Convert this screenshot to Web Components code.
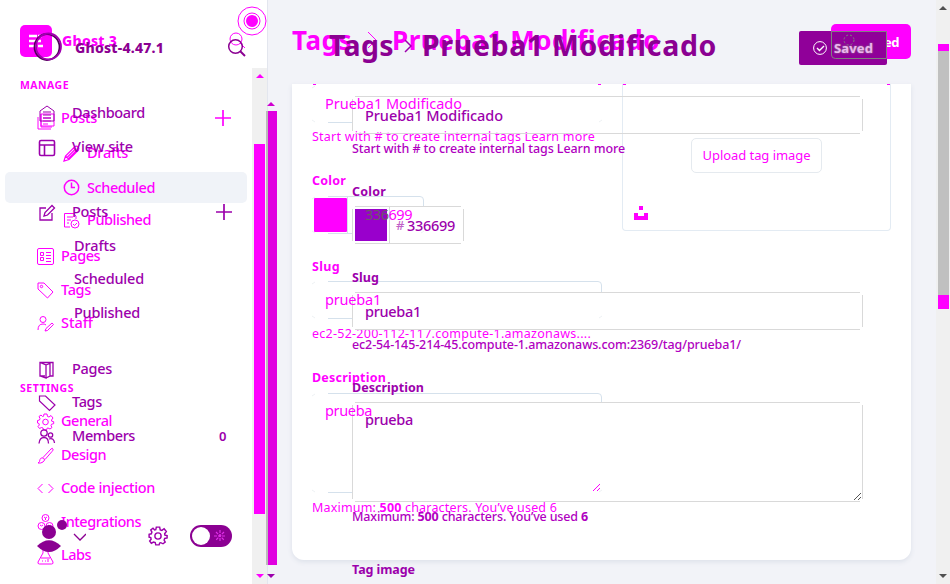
<!DOCTYPE html>
<html lang="en"><head><meta charset="utf-8"><title>Tags</title>
<style>
html,body{margin:0;height:584px;overflow:hidden;background:#f2f3f8}
body{font-family:"Noto Sans","Open Sans",sans-serif}
</style></head><body>
<app-shell></app-shell>
<script>
const define=(name,html,after)=>customElements.define(name,class extends HTMLElement{
  connectedCallback(){
    if(this.shadowRoot)return;
    this.attachShadow({mode:'open'}).innerHTML=typeof html==='function'?html(this):html;
    if(after)after(this);
  }
});

// Single line of text, tracked so that it fills the width in "w".
define('fit-text','<style>:host{display:block;flex:none;white-space:nowrap;line-height:20px;height:20px}span{display:inline-block}</style><span><slot></slot></span>',el=>{
  const w=+el.getAttribute('w'),s=el.shadowRoot.querySelector('span');
  el.style.width=w+'px';
  const n=el.textContent.length,have=s.getBoundingClientRect().width;
  s.style.letterSpacing=((w-have)/n)+'px';
});

const icons={
  posts:'<path d="M4 4v13h11M1 7v12h13M4 4h13v12H4zM6 8h8M6 11h8M6 14h5"/>',
  home:'<path d="M2 16V6l7-5 7 5v10zM5 7h8M5 10h8M5 13h8"/>',
  layout:'<path stroke-width="1.600" d="M3 1.500h12q1.500 0 1.500 1.500v12q0 1.500-1.500 1.500H3Q1.500 16.500 1.500 15V3Q1.500 1.500 3 1.500zM1.500 6h15M6.500 6v10.500"/>',
  pencil:'<path d="M1 16l1.500-5L12 1.500q1.500-1 3 .5t.5 3L6 14.500zM2.500 11l3.500 3.500M10.500 3l3.500 3.500M4 12.500l8-8M5.500 13.500l8-8" stroke-width="1.200"/>',
  clock:'<circle cx="8.500" cy="8.500" r="7.200" stroke-width="1.500"/><path stroke-width="1.500" d="M8.500 3.500v5H12"/>',
  pub:'<path d="M7 15H1.500V1.500h9L13 4v3M4 5h6M4 8h4M4 11h2"/><circle cx="12" cy="12" r="4"/><path d="M10 12l1.500 1.500L14 11"/>',
  edit:'<path stroke-width="1.300" d="M8 4H2v12h12V9M6 12l1-3.500L14 1.500l2.500 2.500-7 7z"/>',
  list:'<rect x=".5" y=".5" width="16" height="16" rx="1.500"/><path d="M3.500 4.500h3v3h-3zM3.500 9.500h3v3h-3zM9 4.500h5M9 7.500h5M9 10.500h5M9 13.500h5"/>',
  tag:'<path d="M1 1h6l9 9-5.500 6L1 7z"/><circle cx="4.500" cy="4.500" r="1.200"/>',
  tag2:'<path stroke-width="1.200" d="M1.500 2h6L17 11l-5.500 5.500L1.500 7z"/>',
  staff:'<circle cx="6" cy="4.500" r="3"/><path d="M1 15q0-6 5-6 2 0 3 1M8 16l1-2.500L15 8l1.500 1.500-6 6z"/>',
  book:'<path stroke-width="1.300" d="M7 15H2V1.500h13V15h-3M2 1.500l6 2.500v13l-6-2M8 4l4-1.500V15l-4 2"/>',
  gear:'<path d="M7 1h3l.5 2.500 1.500.5 2-1.500L16 5l-1.500 2 .2 1.200 2 .5v2l-2.200.5-.5 1.500L15 14.500 13 16l-2-1-1 .3L9.500 17h-3L6 15l-1.500-.5-2 1L1 13.500 2.300 12 2 10.500.5 10V7.500L2.500 7 3 5.500 2 3.500 4 2l1.500 1.500 1-.2z"/><circle cx="8.500" cy="9" r="2.800"/>',
  members:'<circle cx="6" cy="5" r="3.200" stroke-width="1.300"/><circle cx="12.500" cy="7" r="2.200" stroke-width="1.300"/><path stroke-width="1.300" d="M1 15.500Q1.500 9.500 6 9.500t4.500 6M11 11q5-1.500 5.500 4"/>',
  brush:'<path d="M1 16q2-1 2-3.500 1-2.500 3.500-1.500Q9 13 6 15q-2 1.500-5 1zM6 10.500L14 2q1.500-1.500 2 0 .5 1-1 2.500L8 12.500"/>',
  code:'<path d="M5.500 4L1 8.500 5.500 13M11.500 4L16 8.500 11.500 13"/>',
  integ:'<circle cx="8.500" cy="4" r="3.500"/><circle cx="4.500" cy="12" r="3.500"/><circle cx="12.500" cy="12" r="3.500"/><path d="M7 3l1.500 1L10 3M8.500 4v2M3 11l1.500 1L6 11M11 11l1.500 1 1.500-1"/>',
  labs:'<path d="M5 1h7M6 1v5L1 15q-.5 2 1.500 2h12q2 0 1.500-2L11 6V1M4 11h9M5 14h1M8 14h1M11 12v3"/>'
};
// Stroked glyph taken from the icon table.
define('g-icon',el=>`<style>:host{display:block;flex:none;width:17px;height:17px}svg{display:block;overflow:visible}</style>
<svg width="17" height="17" viewBox="0 0 17 17" fill="none" stroke="currentColor">${icons[el.getAttribute('name')]}</svg>`);

define('plus-icon',`<style>:host{display:block;flex:none}svg{display:block}</style><svg width="18" height="18" fill="none" stroke="currentColor" stroke-width="1.700"><path d="M9 1v16M1 9h16"/></svg>`);

// One line of the sidebar: icon, label, and whatever is slotted at its end.
define('nav-row',el=>{
  const a=n=>el.getAttribute(n),ic=a('icon');
  return `<style>:host{display:flex;align-items:center;height:${a('h')}px;box-sizing:border-box;padding-left:${a('pad')}px;padding-right:${a('right')||0}px;margin-top:${a('gap')||0}px;font-size:${a('size')||14.5}px;font-weight:${a('weight')||500}}
  g-icon{margin-right:${a('space')||7}px}fit-text{margin-bottom:${a('size')?0:2}px}.end{margin-left:auto}</style>
  ${ic?`<g-icon name="${ic}"></g-icon>`:''}<fit-text w="${a('w')}">${a('label')}</fit-text><div class="end"><slot></slot></div>`;
});

define('nav-back',`<style>
:host{box-sizing:border-box;width:268px;height:584px;background:#fff;border-right:1px solid #e3e6ee;color:#f0f;overflow:hidden;display:grid;grid-template-columns:252px 15px}
.list{grid-column:1;grid-row:1}
.head{display:flex;height:68px;box-sizing:border-box;padding:25px 6px 0 20px;align-items:flex-start}
.logo{width:32px;height:32px;flex:none}
.name{font-weight:800;font-size:14px;margin:6px 0 0 10px}
.find{margin:6px 0 0 auto}
.sel{background:#f0f3f8;border-radius:5px;margin:0 5px}
.bar{grid-column:2;grid-row:1;margin-top:68px;background:#f0f0f0;display:flex;flex-direction:column;align-items:center}
.up,.dn{border:4px solid transparent;width:0;height:0;flex:none;box-sizing:border-box}
.up{border-top:0;border-bottom:4px solid #f0f;margin-top:6px}.dn{border-bottom:0;border-top:4px solid #f0f;margin-top:60px}
.thumb{width:11px;height:370px;background:#f0f;margin-top:66px;flex:none}
nav-row{color:#f0f}
</style>
<div class="list"><div class="head"><svg class="logo" viewBox="0 0 32 32"><rect width="32" height="32" rx="5" fill="#f0f"/><path d="M9 11h8M18 11h4M9 16h12M9 21h7M18 21h5" stroke="#fff" stroke-width="2.500"/></svg>
<fit-text class="name" w="55">Ghost 3</fit-text>
<svg class="find" width="18" height="18" fill="none" stroke="#f0f"><circle cx="8" cy="8" r="6"/><path d="M12 12l5 5"/></svg></div>
<nav-row h="34" pad="20" w="49" label="MANAGE" size="10.5" weight="700"></nav-row>
<nav-row h="32" pad="37" w="36" label="Posts" icon="posts" right="20"><plus-icon></plus-icon></nav-row>
<nav-row h="38" pad="63" w="41" label="Drafts" icon="pencil"></nav-row>
<nav-row class="sel" h="31" pad="58" w="68" label="Scheduled" icon="clock"></nav-row>
<nav-row h="34" pad="63" w="64" label="Published" icon="pub"></nav-row>
<nav-row h="38" pad="37" w="39" label="Pages" icon="list"></nav-row>
<nav-row h="30" pad="37" w="30" label="Tags" icon="tag"></nav-row>
<nav-row h="36" pad="37" w="32" label="Staff" icon="staff"></nav-row>
<nav-row gap="33" h="28" pad="20" w="54" label="SETTINGS" size="10.5" weight="700"></nav-row>
<nav-row h="38" pad="37" w="51" label="General" icon="gear"></nav-row>
<nav-row h="30" pad="37" w="45" label="Design" icon="brush"></nav-row>
<nav-row h="36" pad="37" w="94" label="Code injection" icon="code"></nav-row>
<nav-row h="32" pad="37" w="80" label="Integrations" icon="integ"></nav-row>
<nav-row h="34" pad="37" w="30" label="Labs" icon="labs"></nav-row></div>
<div class="bar"><div class="up"></div><div class="thumb"></div><div class="dn"></div></div>`);

define('nav-front',`<style>
:host{display:grid;grid-template-columns:266px 12px;width:278px;height:584px;color:#9c00ac;overflow:hidden}
.head{display:flex;height:96px;box-sizing:border-box;padding:31px 20px 0 33px;align-items:flex-start}
.ring{flex:none}.name{margin:7px 0 0 12px;font-weight:800;font-size:14px;color:#8b0092}
.find{margin:7px 0 0 auto}
.foot{display:flex;align-items:center;height:40px;margin-top:62px;padding-left:37px}
.foot svg{flex:none}.cog{margin-left:62px;display:grid;width:20px;height:20px;place-items:center}
.toggle{margin-left:22px;width:42px;height:22px;border-radius:11px;background:#8b0092;display:flex;align-items:center;box-sizing:border-box;padding:2px 5px 2px 2px;justify-content:space-between}
.knob{width:18px;height:18px;border-radius:50%;background:#fff}
.bar{display:flex;flex-direction:column}
.up,.dn{width:0;height:0;border:4px solid transparent;flex:none;margin-left:1px}.up{border-top:0;border-bottom:4px solid #d000d0;margin-top:102px}.dn{border-bottom:0;border-top:4px solid #9c00ac;margin-top:9px}
.thumb{margin-top:5px;height:454px;width:9px;border-left:2px solid #bbb;background:#e000e0;flex:none}
</style>
<div><div class="head"><svg class="ring" width="30" height="32" fill="none"><ellipse cx="14" cy="16" rx="12.500" ry="13" stroke="#500058" stroke-width="1.800"/><ellipse cx="15.500" cy="15.500" rx="12.500" ry="13" stroke="#a000b0" stroke-width="1.800"/></svg>
<fit-text class="name" w="89">Ghost-4.47.1</fit-text>
<svg class="find" width="19" height="20" fill="none" stroke="#8b0092" stroke-width="1.500"><circle cx="8.500" cy="8.500" r="6.800"/><path stroke-width="2" d="M13 13l5 5"/></svg></div>
<nav-row h="34" pad="38" space="17" w="73" label="Dashboard" icon="home"></nav-row>
<nav-row h="34" pad="38" space="17" w="61" label="View site" icon="layout"></nav-row>
<nav-row gap="32" h="32" pad="38" space="17" w="36" label="Posts" icon="edit" right="33"><plus-icon></plus-icon></nav-row>
<nav-row h="36" pad="74" w="42" label="Drafts"></nav-row>
<nav-row h="30" pad="74" w="70" label="Scheduled"></nav-row>
<nav-row h="38" pad="74" w="66" label="Published"></nav-row>
<nav-row gap="20" h="34" pad="38" space="17" w="40" label="Pages" icon="book"></nav-row>
<nav-row h="32" pad="38" space="17" w="30" label="Tags" icon="tag2"></nav-row>
<nav-row h="36" pad="38" space="17" w="63" label="Members" icon="members" right="39"><fit-text w="8" style="font-size:13px;font-weight:600">0</fit-text></nav-row>
<div class="foot"><svg width="49" height="36" fill="#8b0092"><circle cx="12" cy="14" r="7"/><path d="M0 28Q12 16.500 24 28 12 40 0 28z"/><circle cx="25" cy="7" r="5"/><path d="M37 16l6 6 6-6" fill="none" stroke="#8b0092" stroke-width="1.300"/></svg>
<span class="cog"><svg width="20" height="20" viewBox="0 0 17 18" fill="none" stroke="currentColor" stroke-width="1.300">${icons.gear}</svg></span>
<span class="toggle"><span class="knob"></span><svg width="14" height="14" stroke="#e030e8" stroke-width="1.200" stroke-dasharray="3 1"><path d="M7 1v12M1 7h12M3 3l8 8M11 3l-8 8"/></svg></span></div></div>
<div class="bar"><div class="up"></div><div class="thumb"></div><div class="dn"></div></div>`);

// Field whose outline is partly hidden behind the field in front of it.
define('back-field',el=>{
  const w=+el.getAttribute('w'),h=+el.getAttribute('h')||38,top=+el.getAttribute('drop')||11,tall=h>50;
  return `<style>:host{display:grid;width:${w}px;height:${h}px;font-size:14.5px}svg,.t{grid-area:1/1}svg{display:block}.t{padding:${tall?7:8}px 0 0 ${el.getAttribute('pad')||13}px;z-index:2}</style>
  <svg width="${w}" height="${h}" fill="none" stroke="#d5e1ec">${el.hasAttribute('bare')?'':`<path d="M16 .5H${w-4}q3.500 0 3.500 3.500V${top}"/>`}<path d="M16 ${h-.5}h24"/><path stroke="#eef1f4" d="M0 3l3-2M0 ${h-3}l3 2M${w-3} ${h-1}l3-2"/>
  ${tall?`<path stroke="#f0f" d="M${w-9} ${h-2}l7-7M${w-5} ${h-2}l3-3"/>`:''}${el.hasAttribute('swatch')?'<path d="M35.500 0v37"/><rect x="2" y="2" width="33" height="34" rx="1" fill="#f0f" stroke="none"/>':''}</svg><div class="t"><slot></slot></div>`;
});
define('front-field',el=>{
  const w=+el.getAttribute('w'),h=+el.getAttribute('h')||38,tall=h>50;
  return `<style>:host{display:grid;width:${w}px;height:${h}px;font-size:14.5px;font-weight:500}svg,.t{grid-area:1/1}svg{display:block}.t{display:flex;padding:${tall?7:9}px 0 0 ${el.getAttribute('pad')||13}px;z-index:1}</style>
  <svg width="${w}" height="${h}" fill="none" stroke="#d9d9d9"><path d="M3 .5H${w-3}M3 ${h-.5}H${w-3}M.5 3V${h-3}M${w-.5} 3V${h-3}"/>${tall?`<path stroke="#555" d="M${w-9} ${h-2}l7-7M${w-5} ${h-2}l3-3"/>`:''}${el.hasAttribute('swatch')?'<path d="M37.500 1v36"/><path fill="#90c" stroke="none" d="M3 3h32v32H3z"/>':''}</svg><div class="t"><slot></slot></div>`;
});
// Label or hint line above or below a field.
define('form-line',el=>`<style>:host{display:flex;align-items:center;height:${el.getAttribute('h')}px;margin-top:${el.getAttribute('gap')||0}px;font-size:12.5px}:host([bold]){font-weight:700}</style><slot></slot>`);

define('page-back',`<style>
:host{display:block;height:584px;padding-left:25px;color:#f0f;box-sizing:border-box}
header{height:84px;box-sizing:border-box;display:flex;width:619px;padding-top:24px}
h2{margin:5px 0 0;display:flex;align-items:center;height:22px;font-size:26px;font-weight:700}
h2 svg{margin:0 15px}h2 fit-text{line-height:22px;height:22px}
.btn{width:80px;height:35px;box-sizing:border-box;margin-left:auto;background:#f0f;border-radius:5px;color:#fff;display:flex;align-items:center;justify-content:flex-end;padding-right:12px;font-weight:700;font-size:13px}
.card{display:flex;gap:20px;width:619px;height:476px;box-sizing:border-box;padding-left:20px;background:#fff;border-radius:0 0 12px 12px;box-shadow:0 2px 5px #dde1ea}
.form{width:290px;padding-top:1px;background:linear-gradient(#f0f,#f0f) 1px 0/3px 1px no-repeat,linear-gradient(#f0f,#f0f) 286px 0/3px 1px no-repeat}
.image{width:269px;height:147px;box-sizing:border-box;border:1px solid #e3ebf3;border-top:0;border-radius:0 0 4px 4px;padding:54px 0 0 11px;background:linear-gradient(#f0f,#f0f) 0 0/3px 1px no-repeat,linear-gradient(#f0f,#f0f) 100% 0/3px 1px no-repeat}
.upload{width:131px;height:35px;box-sizing:border-box;border:1px solid #e5eaef;border-radius:5px;display:flex;justify-content:center;align-items:center;font-size:13px;margin-left:57px}
.upload fit-text{margin-bottom:1px}
.splash{display:block;margin-top:33px}
.dim{color:#6b5a6b}
</style>
<header><h2><fit-text w="60">Tags</fit-text><svg width="10" height="18" fill="none" stroke="#f0f"><path d="M1 1l8 8-8 8"/></svg><fit-text w="268">Prueba1 Modificado</fit-text></h2><div class="btn"><fit-text w="36">Saved</fit-text></div></header>
<div class="card"><div class="form">
<back-field w="290" bare><fit-text w="137">Prueba1 Modificado</fit-text></back-field>
<form-line h="28"><fit-text w="283">Start with # to create internal tags Learn more</fit-text></form-line>
<form-line gap="16" h="28" bold><fit-text w="34">Color</fit-text></form-line>
<back-field style="margin-top:1px" w="112" swatch pad="53"><fit-text w="47"><span class="dim">336</span>699</fit-text></back-field>
<form-line gap="19" h="28" bold><fit-text w="28">Slug</fit-text></form-line>
<back-field w="290"><fit-text w="56">prueba1</fit-text></back-field>
<form-line h="30"><fit-text w="279">ec2-52-200-112-117.compute-1.amazonaws....</fit-text></form-line>
<form-line gap="14" h="30" bold><fit-text w="74">Description</fit-text></form-line>
<back-field w="290" h="100" drop="9"><fit-text w="47">prueba</fit-text></back-field>
<form-line h="30"><fit-text w="245">Maximum: <b>500</b> characters. You’ve used 6</fit-text></form-line>
</div><div class="image"><div class="upload"><fit-text w="108">Upload tag image</fit-text></div><svg class="splash" width="14" height="14"><path fill="#f0f" d="M5 0h4v4H5zM0 7h4v3h6V7h4v7H0z"/></svg></div></div>`);

define('page-front',`<style>
:host{display:block;height:584px;overflow:hidden;color:#9c00ac;box-sizing:border-box}
header{display:flex;height:96px;box-sizing:border-box;padding:31px 0 0 62px;width:620px}
h1{display:flex;align-items:center;height:28px;margin:0;color:#8b0092;font-size:28.5px;font-weight:700}
h1 fit-text{line-height:30px;height:30px}h1 svg{margin:2px 10px 0}
.btn{width:88px;height:34px;margin-left:auto;background:#900099;border-radius:2px;color:#fff;display:flex;align-items:center;box-sizing:border-box;padding-left:14px;gap:7px;font-size:13px;font-weight:700}
.btn fit-text{color:#f0b0f2;text-shadow:0 0 1px #888,0 0 2px #888}
.form{padding-left:85px}
.hint{color:#b000c0;font-weight:500}
.hash{margin-right:3px;color:#c060c8;font-size:13px}
</style>
<header><h1><fit-text w="65">Tags</fit-text><svg width="8" height="18" fill="none" stroke="#9c00ac" stroke-width="1.500"><path d="M1 3l6 6-6 6"/></svg><fit-text w="295">Prueba1 Modificado</fit-text></h1>
<div class="btn"><svg width="14" height="14" fill="none" stroke="#fff"><circle cx="7" cy="7" r="6.400"/><path d="M4 7l2.500 2.500L11 5" stroke-width="1.400"/></svg><fit-text w="39">Saved</fit-text></div></header>
<div class="form">
<front-field w="511"><fit-text w="138">Prueba1 Modificado</fit-text></front-field>
<form-line class="hint" h="30"><fit-text w="273">Start with # to create internal tags Learn more</fit-text></form-line>
<form-line gap="14" h="28" bold><fit-text w="34">Color</fit-text></form-line>
<front-field w="112" swatch pad="44"><fit-text class="hash" w="8">#</fit-text><fit-text w="48">336699</fit-text></front-field>
<form-line gap="20" h="28" bold><fit-text w="27">Slug</fit-text></form-line>
<front-field w="511"><fit-text w="56">prueba1</fit-text></front-field>
<form-line class="hint" h="30"><fit-text w="389">ec2-54-145-214-45.compute-1.amazonaws.com:2369/tag/prueba1/</fit-text></form-line>
<form-line gap="14" h="28" bold><fit-text w="72">Description</fit-text></form-line>
<front-field w="511" h="100"><fit-text w="48">prueba</fit-text></front-field>
<form-line class="hint" h="30"><fit-text w="236">Maximum: <b>500</b> characters. You’ve used <b>6</b></fit-text></form-line>
<form-line gap="23" h="30" bold><fit-text w="63">Tag image</fit-text></form-line>
</div>`);

define('page-scroll',`<style>:host{display:flex;flex-direction:column;align-items:center;background:#f0f0f0;height:584px;width:14px}
.up,.dn{width:0;height:0;border:4px solid transparent}.up{border-top:0;border-bottom:4px solid #505050;margin-top:6px}.dn{border-bottom:0;border-top:4px solid #505050;margin-top:265px}
.t{width:11px;height:244px;margin-top:34px;border-top:7px solid #f0f;border-bottom:14px solid #f0f;background:#c0c0c0}</style>
<div class="up"></div><div class="t"></div><div class="dn"></div>`);

define('app-shell',`<style>
:host{display:grid;width:950px;height:584px;grid-template-columns:267px 669px 14px;overflow:hidden}
nav-back,nav-front{grid-area:1/1}page-back,page-front{grid-area:1/2}page-scroll{grid-area:1/3}
nav-front{z-index:2}page-front{z-index:1}
.pointer{position:absolute;left:237px;top:6px;z-index:3}
.trace{position:absolute;left:831px;top:31px;z-index:3}
</style>
<nav-back></nav-back><page-back></page-back><page-front></page-front><nav-front></nav-front><page-scroll></page-scroll>
<svg class="pointer" width="30" height="30" fill="none" stroke="#f0f"><circle cx="15" cy="15" r="14"/><circle cx="15" cy="15" r="8"/><circle cx="15" cy="15" r="6" fill="#f0f" stroke="none"/></svg>
<svg class="trace" width="56" height="28" fill="none" stroke="#808080"><path d="M.5 0v24q0 3.500 4 3.500h51V.5H1"/><circle cx="18" cy="9" r="5" stroke-dasharray="2 2"/></svg>`);
</script></body></html>
